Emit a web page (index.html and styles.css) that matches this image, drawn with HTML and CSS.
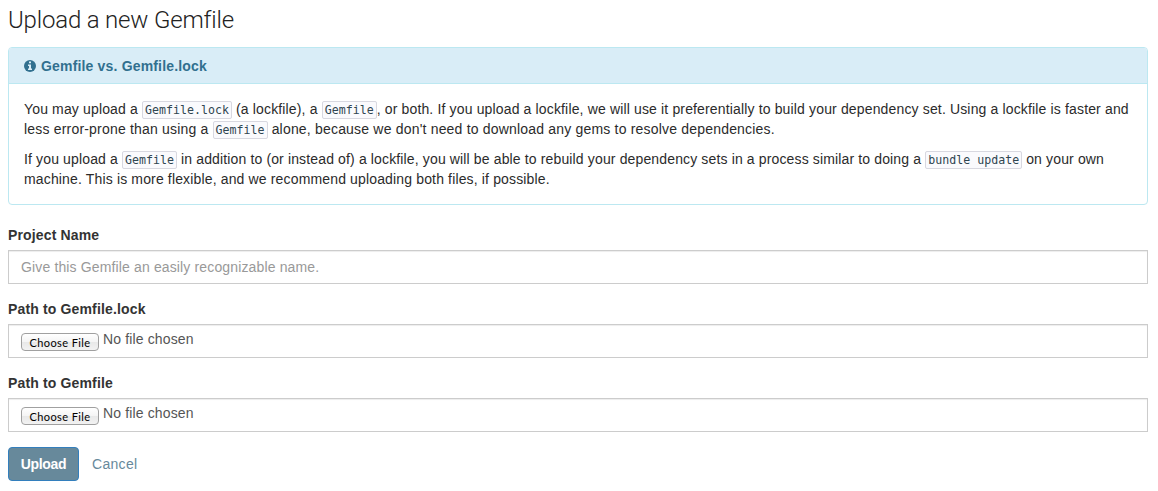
FILE: index.html
```html
<!DOCTYPE html>
<html lang="en">
<head>
<meta charset="utf-8">
<title>Upload a new Gemfile</title>
<link rel="stylesheet" href="styles.css">
</head>
<body>
<h1 class="title"><span>Upload a new Gemfile</span></h1>
<section class="panel">
  <h2 class="panel-heading">
    <svg class="info" viewBox="0 0 12 12" aria-hidden="true"><circle cx="6" cy="6" r="6" fill="#31708f"/><path d="M5 1.5h2v1.7H5zM4 4.5h3v4h1V10H4V8.5h1V6H4z" fill="#d9edf7"/></svg>
    <span>Gemfile vs. Gemfile.lock</span>
  </h2>
  <div class="panel-body">
    <p><span class="line l1">You may upload a <code>Gemfile.lock</code> (a lockfile), a <code>Gemfile</code>, or both. If you upload a lockfile, we will use it preferentially to build your dependency set. Using a lockfile is faster and</span>
    <span class="line l2">less error-prone than using a <code>Gemfile</code> alone, because we don't need to download any gems to resolve dependencies.</span></p>
    <p><span class="line l3">If you upload a <code>Gemfile</code> in addition to (or instead of) a lockfile, you will be able to rebuild your dependency sets in a process similar to doing a <code>bundle update</code> on your own</span>
    <span class="line l4">machine. This is more flexible, and we recommend uploading both files, if possible.</span></p>
  </div>
</section>
<form class="form">
  <div class="group">
    <label class="label" for="name">Project Name</label>
    <input class="control" id="name" type="text" placeholder="Give this Gemfile an easily recognizable name.">
  </div>
  <div class="group">
    <span class="label">Path to Gemfile.lock</span>
    <div class="control file"><button class="choose" type="button">Choose File</button><span class="filename">No file chosen</span></div>
  </div>
  <div class="group">
    <span class="label">Path to Gemfile</span>
    <div class="control file"><button class="choose" type="button">Choose File</button><span class="filename">No file chosen</span></div>
  </div>
  <div class="actions"><button class="upload" type="button">Upload</button><a class="cancel">Cancel</a></div>
</form>
</body>
</html>
```
FILE: styles.css
```css
* { box-sizing: border-box; }
body {
  margin: 0;
  padding: 7px 10px 0 8px;
  background: #fff;
  color: #333;
  font: 14px/20px "Liberation Sans", Arial, sans-serif;
  letter-spacing: 0.15px;
  overflow: hidden;
}
.title {
  margin: 0 0 14px;
  color: #222;
  font: 300 24px/26px Roboto, "Liberation Sans", sans-serif;
  letter-spacing: -0.18px;
}
.panel {
  height: 158px;
  border: 1px solid #bce8f1;
  border-radius: 4px;
  margin-bottom: 20px;
}
.panel-heading {
  display: flex;
  align-items: center;
  gap: 5px;
  height: 36px;
  margin: 0;
  padding: 0 15px;
  border-bottom: 1px solid #bce8f1;
  border-radius: 3px 3px 0 0;
  background: #d9edf7;
  color: #31708f;
  font-size: 14px;
  line-height: 20px;
  letter-spacing: 0.17px;
}
.info { width: 12px; height: 12px; }
.panel-body { padding: 15px; color: #2b2b2b; }
.panel-body p { margin: 0 0 10px; }
.line { display: block; white-space: nowrap; }
.l2 { letter-spacing: 0.19px; }
.l3 { letter-spacing: 0.14px; }
code {
  padding: 1px 2px;
  border: 1px solid #d8d8e0;
  border-radius: 2px;
  background: #fafafd;
  color: #2f4550;
  font: 11.6px/14px "DejaVu Sans Mono", monospace;
  letter-spacing: 0.016px;
}
.group { margin-bottom: 15px; }
.label { display: block; margin-bottom: 5px; font-weight: 700; line-height: 20px; }
.control {
  display: block;
  width: 100%;
  height: 34px;
  padding: 6px 12px;
  border: 1px solid #ccc;
  border-radius: 0;
  box-shadow: inset 0 1px 1px rgba(0, 0, 0, .075);
  color: #555;
  font: 14px/20px "Liberation Sans", Arial, sans-serif;
  letter-spacing: 0.14px;
}
.control::placeholder { color: #999; opacity: 1; }
.file { display: flex; gap: 4px; padding-top: 4px; }
.choose {
  width: 78px;
  height: 18px;
  margin-top: 4px;
  padding: 1px 0 0;
  border: 1px solid #a0a0a0;
  border-radius: 4px;
  background: linear-gradient(#fff, #f4f4f4 50%, #e8e8e8 51%, #f2f2f2);
  color: #000;
  font: 11px/16px Lato, sans-serif;
  letter-spacing: 0.4px;
}
.actions { display: flex; align-items: center; gap: 13px; }
.upload {
  width: 71px;
  height: 34px;
  padding: 0;
  border: 1px solid #337fbd;
  border-radius: 4px;
  background: #67899b;
  color: #fff;
  font: 700 14px/20px "Liberation Sans", Arial, sans-serif;
  letter-spacing: -0.3px;
}
.cancel { color: #67899b; letter-spacing: 0.3px; }
```
